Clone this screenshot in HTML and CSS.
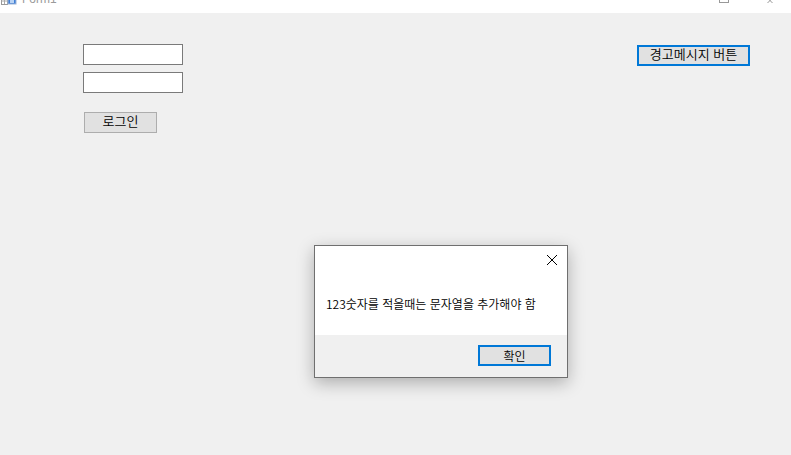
FILE: index.html
```html
<!DOCTYPE html>
<html lang="ko">
<head>
<meta charset="utf-8">
<title>Form1</title>
<link rel="stylesheet" href="styles.css">
</head>
<body>
<div class="window">
  <header class="titlebar">
    <div class="title-left">
      <svg class="app-icon" width="16" height="16" viewBox="0 0 16 16"><rect x="0.5" y="6.5" width="6" height="7" fill="#fff" stroke="#999"/><path d="M0.5 10h6M3.5 7v6" stroke="#aaa"/><rect x="7" y="3" width="8" height="10" fill="#3f7fd8" stroke="#9db4d6"/><rect x="9" y="7" width="4" height="5" fill="#b9d3f4"/></svg>
      <span class="title-text">Form1</span>
    </div>
    <div class="title-controls">
      <svg class="ctl-max" width="10" height="10" viewBox="0 0 10 10"><rect x="0.5" y="-5.5" width="9" height="8" fill="none" stroke="#999"/></svg>
      <svg class="ctl-close" width="12" height="10" viewBox="0 0 12 10"><path d="M0 -5L8 3M11 -5L3 3" transform="translate(0.5 0)" stroke="#999" fill="none"/></svg>
    </div>
  </header>
  <main class="form">
    <div class="login">
      <input class="field" type="text" aria-label="아이디">
      <input class="field" type="password" aria-label="비밀번호">
      <button class="btn btn-login">로그인</button>
    </div>
    <button class="btn btn-focus btn-alert">경고메시지 버튼</button>
  </main>
</div>
<section class="dialog">
  <div class="dialog-head">
    <svg class="dialog-close" width="12" height="12" viewBox="0 0 12 12"><path d="M1 1L11 11M11 1L1 11" stroke="#000" stroke-width="1" fill="none"/></svg>
  </div>
  <p class="dialog-msg">123숫자를 적을때는 문자열을 추가해야 함</p>
  <div class="dialog-foot">
    <button class="btn btn-focus btn-ok">확인</button>
  </div>
</section>
</body>
</html>
```
FILE: styles.css
```css
* { box-sizing: border-box; }
html, body { margin: 0; height: 100%; }
body {
  width: 791px;
  height: 455px;
  overflow: hidden;
  background: #f0f0f0;
  font-family: "Noto Sans CJK KR", "Liberation Sans", sans-serif;
  position: relative;
}
.window { display: flex; flex-direction: column; height: 100%; }
.titlebar {
  height: 13px;
  background: #fff;
  display: flex;
  justify-content: space-between;
  overflow: hidden;
  flex: none;
}
.title-left { display: flex; align-items: flex-start; gap: 5px; margin-top: -9px; padding-left: 1px; }
.app-icon { flex: none; }
.title-text {
  font: 12px/16px "Liberation Sans", sans-serif;
  color: #9a9a9a;
}
.title-controls { display: flex; gap: 34px; padding-right: 15px; align-items: flex-start; }
.ctl-max { display: block; margin-right: 1px; }
.ctl-close { display: block; }
.form {
  flex: 1;
  display: flex;
  justify-content: space-between;
  align-items: flex-start;
  padding: 31px 41px 0 83px;
}
.login { display: flex; flex-direction: column; align-items: flex-start; }
.field {
  width: 100px;
  height: 21px;
  border: 1px solid #7a7a7a;
  background: #fff;
  margin: 0 0 7px;
  padding: 0;
  display: block;
}
.btn {
  font-family: "Noto Sans CJK KR", sans-serif;
  font-size: 13px;
  font-weight: 350;
  line-height: 14px;
  color: #000;
  background: #e1e1e1;
  border: 1px solid #adadad;
  padding: 0 0 3px;
  margin: 0;
  display: block;
}
.btn-login { width: 73px; height: 21px; margin: 12px 0 0 1px; }
.btn-focus { border: 2px solid #0078d7; }
.btn-alert { width: 113px; height: 21px; margin-top: 1px; }
.dialog {
  position: absolute;
  left: 314px;
  top: 245px;
  width: 254px;
  height: 133px;
  background: #fff;
  border: 1px solid #6f6f6f;
  box-shadow: 0 5px 16px rgba(0, 0, 0, 0.28);
  display: flex;
  flex-direction: column;
}
.dialog-head { height: 28px; display: flex; justify-content: flex-end; padding: 8px 9px 0 0; flex: none; }
.dialog-close { display: block; }
.dialog-msg {
  margin: 0;
  flex: 1;
  padding: 22px 0 0 11px;
  font-size: 12px;
  font-weight: 350;
  line-height: 16px;
  color: #000;
}
.dialog-foot {
  height: 42px;
  flex: none;
  background: #f0f0f0;
  display: flex;
  justify-content: flex-end;
  align-items: flex-start;
  padding: 10px 16px 0 0;
}
.btn-ok { width: 73px; height: 21px; font-size: 12px; padding: 0; }
```
